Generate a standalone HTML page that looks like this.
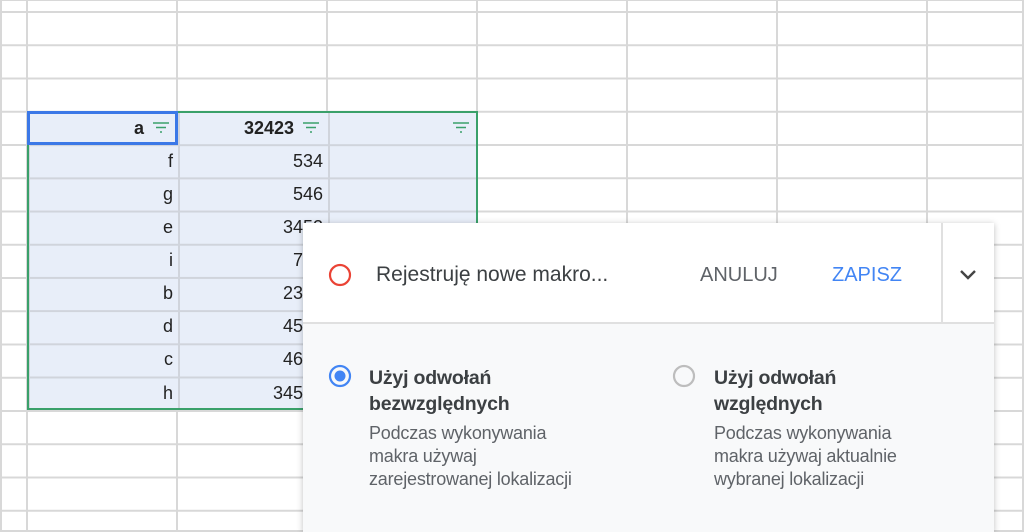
<!DOCTYPE html>
<html style="overflow:hidden;height:532px"><head><meta charset="utf-8"><style>
*{margin:0;padding:0;box-sizing:border-box}
body{width:1024px;height:532px;overflow:hidden;background:#fff;position:relative;font-family:"Liberation Sans",sans-serif}
.grid{position:absolute;left:0;top:0;width:1024px;height:532px;
background-image:linear-gradient(to right,#d8d8d8 2px,transparent 2px),linear-gradient(to bottom,#d8d8d8 2px,transparent 2px);
background-size:150px 100%,100% 33.25px;background-position:26px 0,0 11px}
.frame{position:absolute;left:0;top:0;width:1024px;height:532px;border:2px solid #d8d8d8;border-top-width:1px}
.tbl{position:absolute;left:27px;top:111px;width:451px;height:299px;background:#e8eef9;
background-image:linear-gradient(to right,#d0d4dc 2px,transparent 2px),linear-gradient(to bottom,#d0d4dc 2px,transparent 2px);
background-size:150px 100%,100% 33.2px;background-position:-1px 0,0 -2px;border:2px solid #3aa06a}
.c{position:absolute;font-size:18px;color:#222;text-align:right;width:140px;line-height:33px}
.sel{position:absolute;left:27px;top:111px;width:151px;height:34px;border:3px solid #3b78e7}
.f{position:absolute;width:18px;height:12px}
.panel{position:absolute;left:303px;top:223px;width:691px;height:309px;background:#f8f9fa;box-shadow:0 1px 6px rgba(0,0,0,.25)}
.hdr{position:absolute;left:0;top:0;width:691px;height:101px;background:#fff;border-bottom:2px solid #e0e0e0}
.t{position:absolute;white-space:nowrap}
</style></head><body>
<div class="grid"></div>
<div class="frame"></div>
<div class="tbl"></div>
<div class="sel"></div>
<div class="c" style="left:4px;top:112px;font-weight:bold">a</div>
<div class="c" style="left:154px;top:112px;font-weight:bold">32423</div>
<svg class="f" style="left:152px;top:122px" viewBox="0 0 18 12"><path d="M1 1h16M4 5.5h10M8 10h2" stroke="#3aa06a" stroke-width="1.6"/></svg>
<svg class="f" style="left:302px;top:122px" viewBox="0 0 18 12"><path d="M1 1h16M4 5.5h10M8 10h2" stroke="#3aa06a" stroke-width="1.6"/></svg>
<svg class="f" style="left:452px;top:122px" viewBox="0 0 18 12"><path d="M1 1h16M4 5.5h10M8 10h2" stroke="#3aa06a" stroke-width="1.6"/></svg>
<div class="c" style="left:33px;top:145px">f</div><div class="c" style="left:183px;top:145px">534</div>
<div class="c" style="left:33px;top:178px">g</div><div class="c" style="left:183px;top:178px">546</div>
<div class="c" style="left:33px;top:211px">e</div><div class="c" style="left:183px;top:211px">3452</div>
<div class="c" style="left:33px;top:244px">i</div><div class="c" style="left:183px;top:244px">765</div>
<div class="c" style="left:33px;top:277px">b</div><div class="c" style="left:183px;top:277px">2342</div>
<div class="c" style="left:33px;top:310px">d</div><div class="c" style="left:183px;top:310px">4565</div>
<div class="c" style="left:33px;top:343px">c</div><div class="c" style="left:183px;top:343px">4650</div>
<div class="c" style="left:33px;top:377px">h</div><div class="c" style="left:183px;top:377px">34570</div>
<div class="panel">
 <div class="hdr">
  <svg style="position:absolute;left:25px;top:40px" width="24" height="24"><circle cx="12" cy="12" r="10" fill="none" stroke="#ea4335" stroke-width="2.2"/></svg>
  <div class="t" style="left:73px;top:40px;font-size:21px;color:#3c4043">Rejestruję nowe makro...</div>
  <div class="t" style="left:397px;top:41px;font-size:20px;color:#5f6368">ANULUJ</div>
  <div class="t" style="left:529px;top:41px;font-size:20px;color:#4285f4">ZAPISZ</div>
  <div style="position:absolute;left:638px;top:0;width:2px;height:101px;background:#e0e0e0"></div>
  <svg style="position:absolute;left:656px;top:45px" width="18" height="14"><path d="M2 3l7 7 7-7" fill="none" stroke="#444" stroke-width="2.4"/></svg>
 </div>
 <svg style="position:absolute;left:25px;top:141px" width="24" height="24"><circle cx="12" cy="12" r="10" fill="none" stroke="#4285f4" stroke-width="2.2"/><circle cx="12" cy="12" r="5.5" fill="#4285f4"/></svg>
 <div class="t" style="left:66px;top:142px;font-size:19.5px;color:#3c4043;font-weight:bold;line-height:26px;letter-spacing:-0.2px">Użyj odwołań<br>bezwzględnych</div>
 <div class="t" style="left:66px;top:199px;font-size:18px;color:#5f6368;line-height:23px;letter-spacing:-0.2px">Podczas wykonywania<br>makra używaj<br>zarejestrowanej lokalizacji</div>
 <svg style="position:absolute;left:369px;top:141px" width="24" height="24"><circle cx="12" cy="12" r="10" fill="none" stroke="#bdbdbd" stroke-width="2.2"/></svg>
 <div class="t" style="left:411px;top:142px;font-size:19.5px;color:#3c4043;font-weight:bold;line-height:26px;letter-spacing:-0.2px">Użyj odwołań<br>względnych</div>
 <div class="t" style="left:411px;top:199px;font-size:18px;color:#5f6368;line-height:23px;letter-spacing:-0.2px">Podczas wykonywania<br>makra używaj aktualnie<br>wybranej lokalizacji</div>
</div>
</body></html>
